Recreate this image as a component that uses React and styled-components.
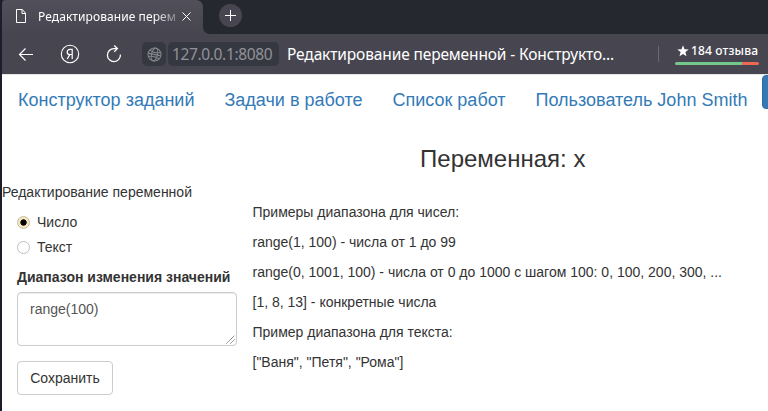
import React from "react";
import styled, { createGlobalStyle } from "styled-components";

const Global = createGlobalStyle`
  *, *::before, *::after { box-sizing: border-box; }
  html, body { margin: 0; padding: 0; overflow: hidden; background: #262830; }
`;

const uiFont = `"Noto Sans", "Open Sans", sans-serif`;
const pageFont = `"Liberation Sans", Arial, sans-serif`;

const Window = styled.div`
  width: 768px;
  height: 411px;
  padding-left: 2px;
  background: #1b1d2c;
  overflow: hidden;
  display: flex;
  flex-direction: column;
`;

const TabStrip = styled.div`
  height: 34px;
  flex: none;
  display: flex;
  background: #474650;
`;

const TabSlot = styled.div`
  width: 201px;
  flex: none;
  background: #262830;
`;

const Tab = styled.div`
  height: 34px;
  display: flex;
  align-items: center;
  padding: 0 12px 2px 14px;
  border-radius: 4px 7px 0 0;
  background: linear-gradient(#51505a, #474650);
`;

const TabTitle = styled.div`
  width: 142px;
  margin: 1px 3px 0 12px;
  white-space: nowrap;
  font: 12px/20px ${uiFont};
  letter-spacing: 0.08px;
  color: #fff;
  mask-image: linear-gradient(90deg, #000 116px, transparent 148px);
`;

const StripRest = styled.div`
  flex: 1;
  padding: 4px 0 0 16px;
  background: #262830;
  border-bottom-left-radius: 7px;
`;

const NewTab = styled.div`
  width: 23px;
  height: 23px;
  border-radius: 50%;
  background: #474650;
  display: flex;
  align-items: center;
  justify-content: center;
`;

const Toolbar = styled.div`
  height: 40px;
  flex: none;
  display: flex;
  align-items: center;
  padding: 0 9px 0 16px;
  background: #474650;
`;

const Icon = styled.svg`
  display: block;
  flex: none;
  fill: none;
  stroke: ${(p) => p.$color || "#fff"};
  margin-left: ${(p) => p.$gap || 0}px;
`;

const SiteBadge = styled.div`
  width: 24px;
  height: 24px;
  margin-left: 20px;
  display: flex;
  align-items: center;
  justify-content: center;
  border-radius: 5px;
  background: #363841;
`;

const Address = styled.div`
  width: 111px;
  height: 24px;
  margin-left: 2px;
  padding-left: 4px;
  border-radius: 5px;
  background: #363841;
  color: #92929a;
  font: 15.5px/24px ${uiFont};
  letter-spacing: -0.36px;
  white-space: nowrap;
`;

const PageTitle = styled.div`
  width: 370px;
  margin-left: 8px;
  color: #fff;
  font: 15.5px/24px ${uiFont};
  letter-spacing: -0.13px;
  white-space: nowrap;
`;

const Divider = styled.div`
  width: 1px;
  height: 16px;
  margin-left: 1px;
  background: #6a6972;
`;

const Reviews = styled.div`
  width: 84px;
  margin: 0 0 2px auto;
`;

const ReviewLabel = styled.div`
  display: flex;
  align-items: center;
  gap: 2px;
  padding: 0 0 2px 2px;
  height: 20px;
  color: #fff;
  font: 500 12px/18px ${uiFont};
  letter-spacing: 0.15px;
  white-space: nowrap;
`;

const RatingBar = styled.div`
  height: 3px;
  border-radius: 2px;
  background: linear-gradient(90deg, #73c78b 67px, #ee6755 67px);
`;

const Page = styled.main`
  flex: 1;
  border-top: 1px solid #e5e5e5;
  background: #fff;
  color: #333;
  font: 14px/20px ${pageFont};
`;

const Nav = styled.nav`
  height: 50px;
  display: flex;
  overflow: hidden;
  padding-left: 1px;
`;

const NavLink = styled.a`
  flex: none;
  padding: 15px;
  font-size: 18px;
  line-height: 20px;
  color: #337ab7;
  white-space: nowrap;
`;

const NavButton = styled.button`
  flex: none;
  width: 90px;
  height: 34px;
  border: 1px solid #2e6da4;
  border-radius: 4px;
  background: #337ab7;
`;

const Columns = styled.div`
  display: grid;
  grid-template-columns: 250.5px 1fr;
`;

const FormColumn = styled.form`
  padding-top: 57px;
`;

const FormBody = styled.div`
  padding: 10px 15px 0;
`;

const Option = styled.label`
  display: flex;
  height: 20px;
  margin-bottom: 5px;
  gap: 7px;
`;

const Radio = styled.span`
  width: 13px;
  height: 13px;
  margin-top: 4px;
  border-radius: 50%;
  border: 1px solid ${(p) => (p.$checked ? "#c6bda4" : "#c0c0c0")};
  background: ${(p) =>
    p.$checked ? "radial-gradient(circle, #000 2.8px, #f7e5bd 3.5px)" : "#fff"};
`;

const FieldLabel = styled.div`
  margin: 10px 0 5px;
  font-weight: 700;
  white-space: nowrap;
`;

const TextArea = styled.div`
  display: flex;
  justify-content: space-between;
  width: 220px;
  height: 54px;
  padding: 6px 1px 1px 12px;
  border: 1px solid #ccc;
  border-radius: 4px;
  box-shadow: inset 0 1px 1px rgba(0, 0, 0, 0.075);
  color: #555;
`;

const Grip = styled.svg`
  align-self: flex-end;
  stroke: #666;
  fill: none;
`;

const SaveButton = styled.button`
  display: block;
  width: 96px;
  height: 34px;
  margin-top: 15px;
  padding: 0;
  border: 1px solid #ccc;
  border-radius: 4px;
  background: #fff;
  color: #333;
  font: 14px/20px ${pageFont};
`;

const Heading = styled.h3`
  margin: 21px 15px 0 0;
  font-size: 24px;
  line-height: 26px;
  font-weight: 400;
  text-align: center;
`;

const Examples = styled.div`
  padding-top: 30px;
`;

const Example = styled.p`
  margin: 0 0 10px;
  white-space: nowrap;
`;

const links = ["Конструктор заданий", "Задачи в работе", "Список работ", "Пользователь John Smith"];

const examples = [
  "Примеры диапазона для чисел:",
  "range(1, 100) - числа от 1 до 99",
  "range(0, 1001, 100) - числа от 0 до 1000 с шагом 100: 0, 100, 200, 300, ...",
  "[1, 8, 13] - конкретные числа",
  "Пример диапазона для текста:",
  '["Ваня", "Петя", "Рома"]',
];

export default function App() {
  return (
    <>
      <Global />
      <Window>
        <TabStrip>
          <TabSlot>
            <Tab>
              <Icon width="10" height="14" viewBox="0 0 10 14">
                <path d="M.5.5h5.8l3.2 3.7v9.3h-9zM6 .7v3.8h3.5" />
              </Icon>
              <TabTitle>Редактирование перем</TabTitle>
              <Icon width="9" height="9" viewBox="0 0 9 9">
                <path d="M.5.5l8 8M8.5.5l-8 8" />
              </Icon>
            </Tab>
          </TabSlot>
          <StripRest>
            <NewTab>
              <Icon width="11" height="11" viewBox="0 0 11 11">
                <path d="M5.5 0v11M0 5.5h11" />
              </Icon>
            </NewTab>
          </StripRest>
        </TabStrip>
        <Toolbar>
          <Icon width="16" height="14" viewBox="0 0 16 14" strokeWidth="1.2">
            <path d="M15 7.5H1.5M7.5 1.5l-6 6 6 6" />
          </Icon>
          <Icon $gap={26} width="20" height="20" viewBox="0 0 20 20" strokeWidth="1.1">
            <circle cx="10" cy="10" r="8.7" />
            <path d="M12.2 15V5.4H10c-1.8 0-2.8 1-2.8 2.5s1 2.6 2.6 2.6h2.4M9.8 10.6L7.2 15" strokeWidth="1.2" />
          </Icon>
          <Icon $gap={26} width="16" height="18" viewBox="0 0 16 18" strokeWidth="1.3">
            <path d="M14.4 9.6A6.5 6.5 0 1 1 8 3.6h3.3M8.2 .5l3.2 3.1-3.2 3.2" />
          </Icon>
          <SiteBadge>
            <Icon $color="#85858d" width="15" height="15" viewBox="0 0 15 15" strokeWidth="1.1">
              <circle cx="7.5" cy="7.5" r="6.5" />
              <g transform="rotate(12 7.5 7.5)">
                <ellipse cx="7.5" cy="7.5" rx="3" ry="6.5" />
                <path d="M1 7.5h13M2 4.2c3 1.4 8 1.4 11 0M2 10.8c3-1.4 8-1.4 11 0" />
              </g>
            </Icon>
          </SiteBadge>
          <Address>127.0.0.1:8080</Address>
          <PageTitle>Редактирование переменной - Конструкто...</PageTitle>
          <Divider />
          <Reviews>
            <ReviewLabel>
              <svg width="12" height="12" viewBox="0 0 12 12" fill="#fff">
                <path d="M6 .3l1.5 3.9 4.2.2-3.3 2.7 1.1 4.2L6 9l-3.5 2.3 1.1-4.2L.3 4.4l4.2-.2z" />
              </svg>
              184 отзыва
            </ReviewLabel>
            <RatingBar />
          </Reviews>
        </Toolbar>
        <Page>
          <Nav>
            {links.map((text) => (
              <NavLink key={text}>{text}</NavLink>
            ))}
            <NavButton aria-label="Выход" />
          </Nav>
          <Columns>
            <FormColumn>
              <div>Редактирование переменной</div>
              <FormBody>
                <Option>
                  <Radio $checked />
                  Число
                </Option>
                <Option>
                  <Radio />
                  Текст
                </Option>
                <FieldLabel>Диапазон изменения значений</FieldLabel>
                <TextArea>
                  range(100)
                  <Grip width="9" height="9" viewBox="0 0 9 9">
                    <path d="M.5 8.5l8-8M4.5 8.5l4-4" strokeDasharray="1.2 .4" />
                  </Grip>
                </TextArea>
                <SaveButton type="button">Сохранить</SaveButton>
              </FormBody>
            </FormColumn>
            <div>
              <Heading>Переменная: x</Heading>
              <Examples>
                {examples.map((text) => (
                  <Example key={text}>{text}</Example>
                ))}
              </Examples>
            </div>
          </Columns>
        </Page>
      </Window>
    </>
  );
}
